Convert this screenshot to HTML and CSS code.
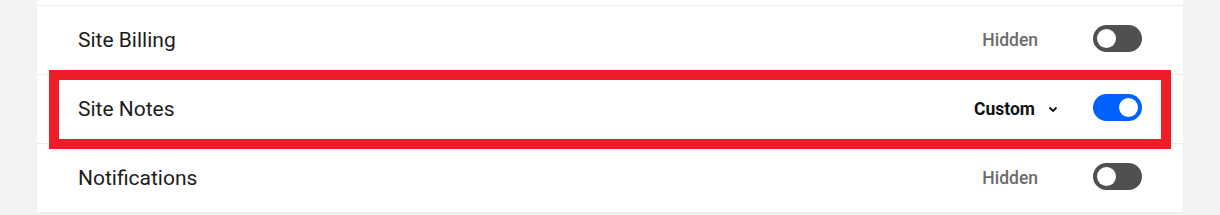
FILE: index.html
```html
<!DOCTYPE html>
<html lang="en">
<head>
    <meta charset="UTF-8">
    <title>Site Permissions</title>
    <link rel="stylesheet" href="styles.css">
</head>
<body>
    <div class="panel">
        <div class="row-cut"></div>
        <div class="row">
            <span class="name">Site Billing</span>
            <div class="ctrl">
                <span class="state">Hidden</span>
                <span class="switch"></span>
            </div>
        </div>
        <div class="row marked">
            <span class="name">Site Notes</span>
            <div class="ctrl">
                <span class="pick">Custom
                    <svg width="10" height="7" viewBox="0 0 10 7"><path d="M1.5 1.5 L5 5 L8.5 1.5" fill="none" stroke="#111" stroke-width="1.8"/></svg>
                </span>
                <span class="switch on"></span>
            </div>
        </div>
        <div class="row">
            <span class="name">Notifications</span>
            <div class="ctrl">
                <span class="state">Hidden</span>
                <span class="switch"></span>
            </div>
        </div>
    </div>
</body>
</html>
```

FILE: styles.css
```css
body {
    margin: 0;
    padding: 0;
    background-color: #f2f2f2;
    font-family: Roboto, "Liberation Sans", sans-serif;
}

.panel {
    margin-left: 37px;
    width: 1146px;
    background-color: #fff;
}

.row-cut {
    height: 5px;
    border-bottom: 1px solid #ececec;
}

.row {
    position: relative;
    display: flex;
    align-items: center;
    justify-content: space-between;
    height: 68px;
    padding: 0 41px;
    border-bottom: 1px solid #ececec;
}

.row .name {
    font-size: 21px;
    color: #1c1c1c;
}

.ctrl {
    display: flex;
    align-items: center;
}

.state {
    font-size: 17.5px;
    font-weight: 500;
    color: #6b6b6b;
    margin-right: 55px;
}

.pick {
    display: flex;
    align-items: center;
    font-size: 17.5px;
    font-weight: 700;
    color: #111;
    margin-right: 35px;
}

.pick svg {
    margin-left: 13px;
}

.switch {
    position: relative;
    width: 49px;
    height: 27px;
    border-radius: 14px;
    background-color: #505050;
    margin-top: -3px;
}

.switch::after {
    content: "";
    position: absolute;
    top: 4px;
    left: 4px;
    width: 19px;
    height: 19px;
    border-radius: 50%;
    background-color: #fff;
}

.switch.on {
    background-color: #0061fe;
}

.switch.on::after {
    left: auto;
    right: 4px;
}

.marked::after {
    content: "";
    position: absolute;
    top: -5px;
    left: 12px;
    right: 12px;
    bottom: -6px;
    border: 10px solid #ed1c27;
    pointer-events: none;
}
```
